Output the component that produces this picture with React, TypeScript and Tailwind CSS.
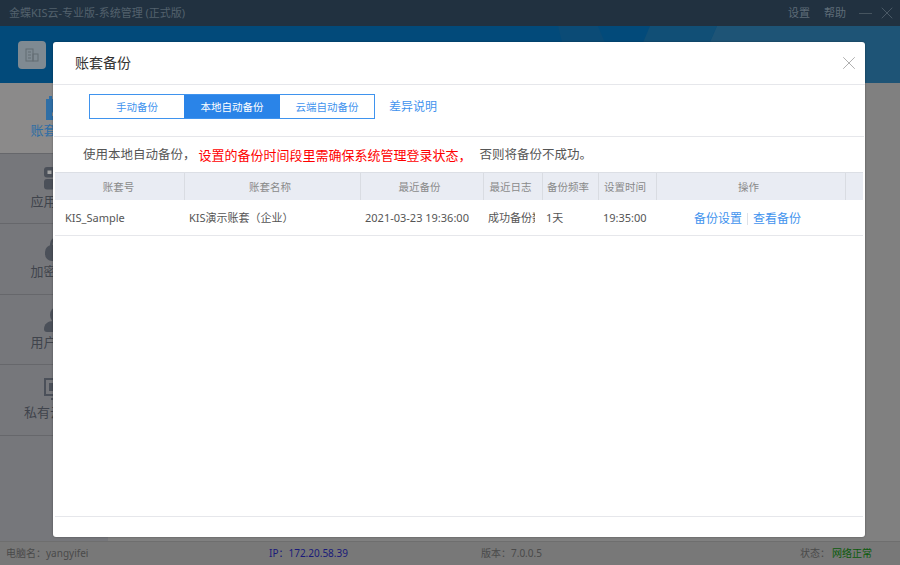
import React from "react";
import { X } from "lucide-react";

const cjk = "font-['Noto_Sans','Noto_Sans_CJK_SC',sans-serif]";

const NavIcon = ({ kind }: { kind: string }) => {
  if (kind === "book")
    return (
      <svg width="26" height="24" viewBox="0 0 26 24">
        <path d="M2 3h3V0h3v3h10V0h3v3h3v21H2z" fill="#2f6ea5" />
        <path d="M9 8h9v3l-5 6h5v3H8v-3l5-6H9z" fill="#8a8a8a" />
      </svg>
    );
  if (kind === "apps")
    return (
      <svg width="26" height="24" viewBox="0 0 26 24" fill="#4b5059">
        <rect x="0" y="0" width="11" height="10.5" rx="3" />
        <rect x="3.5" y="3.5" width="4" height="3.5" fill="#a3a3a3" />
        <rect x="13" y="0" width="11" height="10.5" rx="3" />
        <rect x="0" y="12" width="11" height="10.5" rx="3" />
        <rect x="13" y="12" width="11" height="10.5" rx="3" />
      </svg>
    );
  if (kind === "lock")
    return (
      <svg width="26" height="24" viewBox="0 0 26 24" fill="#4b5059">
        <path d="M6 10V7a7 7 0 0 1 14 0v3h-2.5V7a4.5 4.5 0 0 0-9 0v3z" />
        <rect x="1" y="8" width="24" height="16" rx="7" />
      </svg>
    );
  if (kind === "user")
    return (
      <svg width="26" height="24" viewBox="0 0 26 24" fill="#4b5059">
        <ellipse cx="13" cy="7" rx="7" ry="8" />
        <path d="M0 21c0-5 4-8 9-8h8c5 0 9 3 9 8 0 2-1 3-3 3H3c-2 0-3-1-3-3z" />
      </svg>
    );
  return (
    <svg width="26" height="24" viewBox="0 0 26 24" fill="none" stroke="#4b5059">
      <rect x="1" y="1" width="23" height="16" strokeWidth="2" />
      <rect x="5" y="5" width="15" height="8" fill="#4b5059" stroke="none" />
      <path d="M7 21h12" strokeWidth="2" />
      <path d="M12.5 17v4" strokeWidth="2" />
    </svg>
  );
};

const navItems = [
  { kind: "book", label: "账套管理", color: "text-[#2f6ea5]", bg: "bg-[#8b8a8a]" },
  { kind: "apps", label: "应用管理", color: "text-[#40444c]", bg: "bg-[#76777b]" },
  { kind: "lock", label: "加密管理", color: "text-[#40444c]", bg: "bg-[#76777b]" },
  { kind: "user", label: "用户管理", color: "text-[#40444c]", bg: "bg-[#76777b]" },
  { kind: "cloud", label: "私有云管理", color: "text-[#40444c]", bg: "bg-[#76777b]" },
];

const columns = [
  { title: "账套号", w: "w-[130px]", pr: "pr-[2px]" },
  { title: "账套名称", w: "w-[176px]", pr: "pr-[5px]" },
  { title: "最近备份", w: "w-[123px]", pr: "pr-[5px]" },
  { title: "最近日志", w: "w-[59px]", pr: "pr-[5px]" },
  { title: "备份频率", w: "w-[56px]", pr: "pr-[5px]" },
  { title: "设置时间", w: "w-[58px]", pr: "pr-[5px]" },
  { title: "操作", w: "w-[189px]", pr: "pr-[5px]" },
];

const App = () => {
  return (
    <div className={`relative w-[900px] h-[565px] overflow-hidden flex flex-col bg-[#808080] text-xs ${cjk}`}>
      {/* title bar */}
      <div className="h-[26px] shrink-0 bg-[#213140] flex items-center justify-between pl-[9px] pr-[3px] text-[#53616d]">
        <span className="text-[11px]">金蝶KIS云-专业版-系统管理 (正式版)</span>
        <div className="flex items-center">
          <span className="text-[11px] text-[#5e6c78]">设置</span>
          <span className="text-[11px] text-[#5e6c78] ml-[14px]">帮助</span>
          <span className="w-[13px] h-px bg-[#46545f] ml-[13px]" />
          <X size={20} strokeWidth={1} className="text-[#53626e] ml-[5px]" />
        </div>
      </div>
      {/* header */}
      <div className="relative h-[57px] shrink-0 bg-[#024a7a] pl-[18px] pt-[15px]">
        <svg className="absolute inset-0" width="900" height="57" viewBox="0 0 900 57">
          <path d="M558 0h40l24 57h-50z" fill="#0b4b76" />
          <path d="M650 0h67L692 57h-66z" fill="#114f76" />
          <path d="M717 0h183v57H692z" fill="#1e5476" />
        </svg>
        <div className="relative w-[28px] h-[28px] rounded-[4px] bg-[#7f8a92] flex items-center justify-center">
          <svg width="16" height="16" viewBox="0 0 16 16" fill="none" stroke="#636c73">
            <rect x="2" y="2" width="7" height="12" />
            <rect x="9" y="7" width="5" height="7" />
            <path d="M4 5h3M4 8h3M4 11h3" />
          </svg>
        </div>
      </div>
      <div className="flex-1 flex min-h-0">
        {/* sidebar */}
        <div className="w-[108px] shrink-0 bg-[#76777b]">
          {navItems.map((item) => (
            <div
              key={item.label}
              className={`h-[70.5px] border-b border-[#66676b] flex flex-col items-center pt-[13px] pl-[5px] ${item.bg}`}
            >
              <NavIcon kind={item.kind} />
              <span className={`text-[13px] leading-[20px] ${item.color}`}>{item.label}</span>
            </div>
          ))}
        </div>
        <div className="flex-1" />
      </div>
      {/* status bar */}
      <div className="h-[24px] shrink-0 bg-[#787878] border-t border-[#6e6e6e] flex items-center text-[10px] text-[#4a4a4a]">
        <span className="w-[269px] pl-[6px]">电脑名：yangyifei</span>
        <span className="w-[212px] text-[#1a1a7a]">IP：172.20.58.39</span>
        <span className="w-[319px]">版本：7.0.0.5</span>
        <span>状态：</span>
        <span className="ml-[2px] text-[#0b5a0b]">网络正常</span>
      </div>

      {/* dialog */}
      <div className="absolute left-[53px] top-[42px] w-[812px] h-[495px] bg-white rounded-[3px] flex flex-col shadow-[0_0_2px_rgba(0,0,0,0.4)]">
        <div className="h-[43px] shrink-0 border-b border-[#e6e7eb] flex items-center justify-between pl-[22px] pr-[5px]">
          <span className="text-sm text-[#333]">账套备份</span>
          <X size={22} strokeWidth={1} className="text-[#a8a8a8]" />
        </div>
        <div className="h-[52px] shrink-0 mx-px border-b border-[#e6e7eb] flex items-start pl-[35px] pt-[9px]">
          <div className="flex h-[25px] border border-[#3f93ee] text-[10.5px]">
            <span className="w-[94px] flex items-center justify-center text-[#3f93ee]">手动备份</span>
            <span className="w-[96px] flex items-center justify-center bg-[#2a84e8] text-white">本地自动备份</span>
            <span className="w-[94px] flex items-center justify-center text-[#3f93ee]">云端自动备份</span>
          </div>
          <span className="ml-[14px] h-[25px] flex items-center text-xs text-[#3f93ee]">差异说明</span>
        </div>
        <div className="h-[35px] shrink-0 flex items-center pl-[30px] pt-[2px] text-[12.5px] text-[#555]">
          <span>使用本地自动备份，</span>
          <span className="ml-[3px] text-[13px] text-[#ff0000]">设置的备份时间段里需确保系统管理登录状态，</span>
          <span className="ml-[8px]">否则将备份不成功。</span>
        </div>
        {/* table */}
        <div className="h-[28px] shrink-0 mx-[2px] flex bg-[#e9ecf3] border-t border-[#dcdfe5] text-[10.5px] text-[#8a8a8a]">
          {columns.map((c) => (
            <div key={c.title} className={`${c.w} ${c.pr} flex items-center justify-center border-r border-[#d9dce2]`}>
              {c.title}
            </div>
          ))}
        </div>
        <div className="h-[36px] shrink-0 mx-[2px] flex border-b border-[#e6e7eb] pt-[1px] text-[11px] text-[#555]">
          <div className="w-[130px] flex items-center pl-[10px]">KIS_Sample</div>
          <div className="w-[176px] flex items-center pl-[4px]">KIS演示账套（企业）</div>
          <div className="w-[123px] flex items-center pl-[4px]">2021-03-23 19:36:00</div>
          <div className="w-[59px] flex items-center pl-[4px]">
            <span className="w-[47px] overflow-hidden whitespace-nowrap">成功备份数据</span>
          </div>
          <div className="w-[56px] flex items-center pl-[3px]">1天</div>
          <div className="w-[58px] flex items-center pl-[4px]">19:35:00</div>
          <div className="w-[189px] flex items-center pl-[37px] pt-[1px] text-xs text-[#3f93ee]">
            <span>备份设置</span>
            <span className="w-px h-[12px] bg-[#dfe2e8] mx-[5px]" />
            <span>查看备份</span>
          </div>
        </div>
        <div className="flex-1" />
        <div className="h-[21px] shrink-0 mx-[2px] border-t border-[#e6e7eb]" />
      </div>
    </div>
  );
};

export default App;
